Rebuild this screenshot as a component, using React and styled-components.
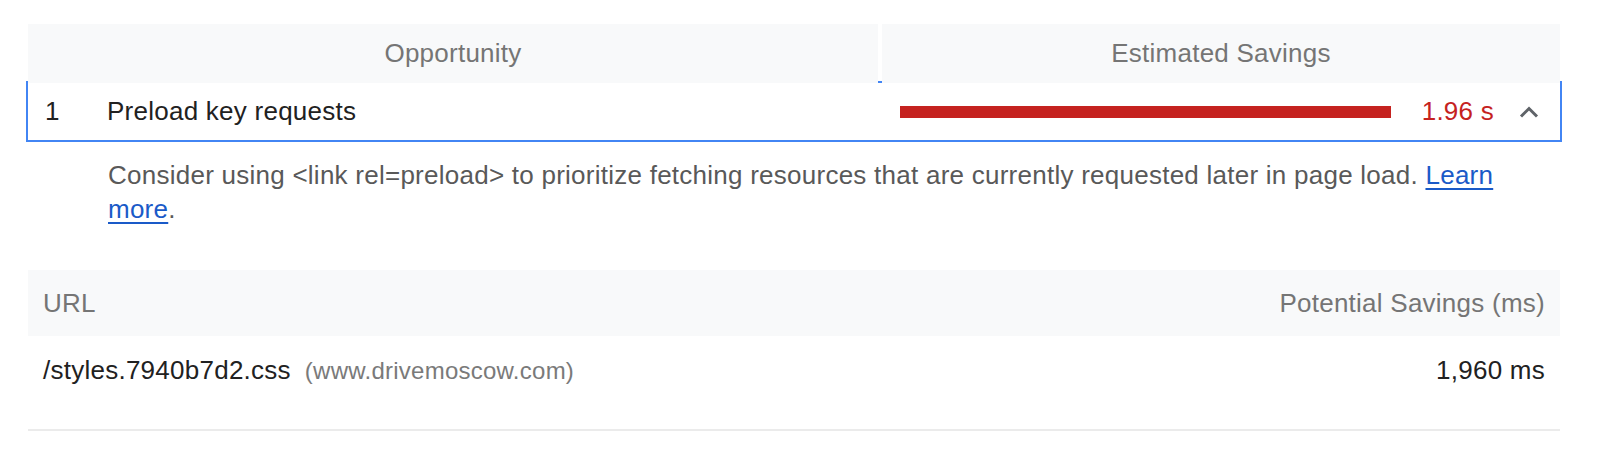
import React from "react";
import styled, { createGlobalStyle } from "styled-components";

const GlobalStyle = createGlobalStyle`
  body {
    margin: 0;
    background: #fff;
    font-family: "Liberation Sans", Arial, Helvetica, sans-serif;
    -webkit-font-smoothing: antialiased;
  }
`;

const Page = styled.div`
  padding: 24px 38px 0 28px;
  font-size: 26px;
  letter-spacing: 0.25px;
  color: #212121;
`;

const OppHeader = styled.div`
  position: relative;
  z-index: 1;
  display: grid;
  grid-template-columns: 850px 1fr;
  column-gap: 4px;
`;

const HeadCell = styled.div`
  height: 59px;
  background: #f8f9fa;
  color: #757575;
  display: flex;
  align-items: center;
  justify-content: center;
`;

const OppRow = styled.div`
  box-sizing: border-box;
  height: 61px;
  margin: -2px -2px 0;
  border: 2px solid #4285f4;
  display: grid;
  grid-template-columns: 850px 1fr;
  column-gap: 4px;
  align-items: center;
`;

const TitleCell = styled.div`
  display: flex;
  align-items: center;
  padding-left: 17px;
`;

const Index = styled.span`
  width: 62px;
`;

const SavingsCell = styled.div`
  display: flex;
  align-items: center;
  padding-left: 18px;
`;

const Bar = styled.div`
  flex: 1;
  height: 12px;
  background: #c5221f;
`;

const Value = styled.span`
  margin-left: 31px;
  color: #c5221f;
`;

const Chevron = styled.svg`
  display: block;
  margin: 0 21px 0 25px;
`;

const Description = styled.p`
  margin: 16px 0 0;
  padding: 0 40px 0 80px;
  line-height: 34px;
  color: #595959;
`;

const Link = styled.a`
  color: #1a5ac8;
  text-decoration: underline;
  text-underline-offset: 4px;
`;

const Details = styled.div`
  margin-top: 44px;
`;

const DetailRow = styled.div`
  height: ${(p) => (p.$head ? 66 : 68)}px;
  padding: 0 15px;
  display: flex;
  align-items: center;
  justify-content: space-between;
  background: ${(p) => (p.$head ? "#f8f9fa" : "transparent")};
  color: ${(p) => (p.$head ? "#757575" : "#212121")};
`;

const Host = styled.span`
  margin-left: 14px;
  font-size: 24px;
  color: #7a7a7a;
`;

const Rule = styled.div`
  margin-top: 25px;
  height: 2px;
  background: #ebebeb;
`;

export default function App() {
  return (
    <Page>
      <GlobalStyle />
      <OppHeader>
        <HeadCell>Opportunity</HeadCell>
        <HeadCell>Estimated Savings</HeadCell>
      </OppHeader>
      <OppRow>
        <TitleCell>
          <Index>1</Index>
          <span>Preload key requests</span>
        </TitleCell>
        <SavingsCell>
          <Bar />
          <Value>1.96 s</Value>
          <Chevron width="20" height="12" viewBox="0 0 20 12">
            <polyline
              points="2,10.5 10,2.5 18,10.5"
              fill="none"
              stroke="#5f6368"
              strokeWidth="3"
            />
          </Chevron>
        </SavingsCell>
      </OppRow>
      <Description>
        Consider using &lt;link rel=preload&gt; to prioritize fetching resources
        that are currently requested later in page load.{" "}
        <Link href="#">Learn more</Link>.
      </Description>
      <Details>
        <DetailRow $head>
          <span>URL</span>
          <span>Potential Savings (ms)</span>
        </DetailRow>
        <DetailRow>
          <span>
            /styles.7940b7d2.css<Host>(www.drivemoscow.com)</Host>
          </span>
          <span>1,960 ms</span>
        </DetailRow>
        <Rule />
      </Details>
    </Page>
  );
}
